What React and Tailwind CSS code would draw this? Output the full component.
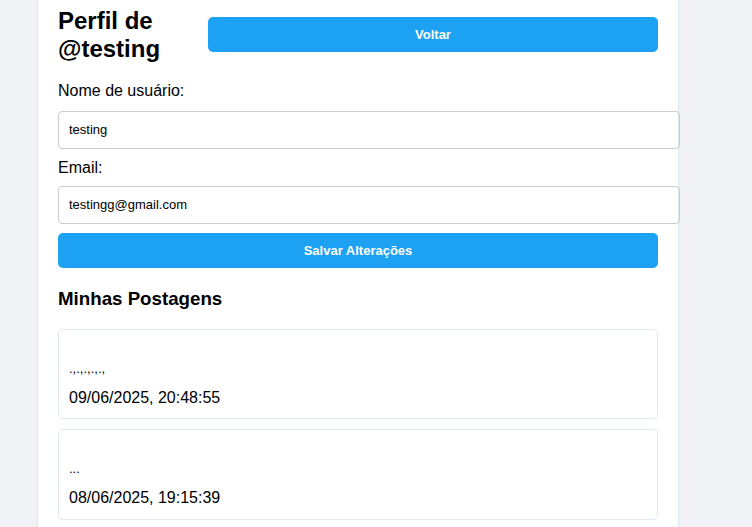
import React from 'react';

const posts = [
  { content: '.,.,.,.,.,', date: '09/06/2025, 20:48:55' },
  { content: '...', date: '08/06/2025, 19:15:39' },
];

export default function App() {
  return (
    <div className="min-h-screen bg-[#f0f2f5] font-['Liberation_Sans',Arial,sans-serif] text-black">
      <div className="ml-[37px] w-[642px] min-h-[527px] bg-white border-x border-[#e1e8ed] px-5 pt-[7px] pb-5">
        <div className="flex items-center justify-between">
          <h1 className="text-[24px] leading-[27.6px] font-bold">Perfil de @testing</h1>
          <button className="shrink-0 w-[450px] h-[35px] bg-[#1da1f2] text-white text-[13px] font-bold rounded-[5px]">
            Voltar
          </button>
        </div>

        <label className="block mt-[20px] mb-[10px] text-[16px] leading-[18.4px]">Nome de usuário:</label>
        <input
          defaultValue="testing"
          className="box-content block w-[600px] h-[16px] px-[10px] py-[10px] border border-[#ccc] rounded-[4px] text-[13px] outline-none"
        />

        <label className="block mt-[10px] mb-[9px] text-[16px] leading-[18.4px]">Email:</label>
        <input
          defaultValue="testingg@gmail.com"
          className="box-content block w-[600px] h-[16px] px-[10px] py-[10px] border border-[#ccc] rounded-[4px] text-[13px] outline-none"
        />

        <button className="mt-[9px] w-full h-[35px] bg-[#1da1f2] text-white text-[13px] font-bold rounded-[5px]">
          Salvar Alterações
        </button>

        <h2 className="mt-[20px] text-[18.72px] leading-[21px] font-bold">Minhas Postagens</h2>

        <div className="mt-[20px] flex flex-col gap-[10px]">
          {posts.map((p) => (
            <div key={p.date} className="border border-[#e1e8ed] rounded-[5px] px-[10px] pt-[10px] pb-[11px]">
              <p className="mt-[21px] text-[13px] leading-[15px]">{p.content}</p>
              <p className="mt-[13px] text-[16px] leading-[18.4px]">{p.date}</p>
            </div>
          ))}
        </div>
      </div>
    </div>
  );
}
